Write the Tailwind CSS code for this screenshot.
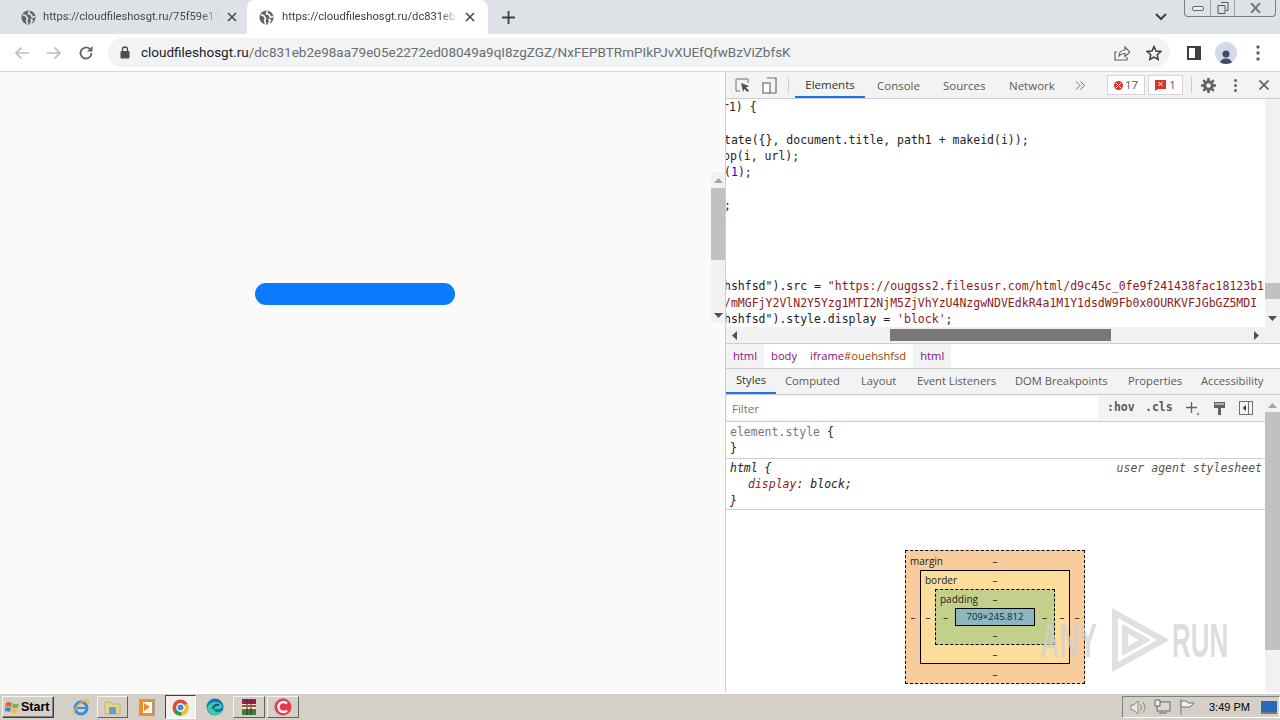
<!DOCTYPE html>
<html>
<head>
<meta charset="utf-8">
<script src="https://cdn.jsdelivr.net/npm/@tailwindcss/browser@4"></script>
</head>
<body class="w-[1280px] h-[720px] overflow-hidden bg-white font-['Open_Sans',sans-serif] text-[#303942]">
<div class="flex flex-col w-[1280px] h-[720px]">

  <!-- Tab strip -->
  <div class="h-[34px] shrink-0 bg-[#dee1e6] flex items-center relative">
    <div class="w-[247px] h-full flex items-center pl-[21px] shrink-0">
      <svg class="w-[15px] h-[15px] shrink-0" viewBox="0 0 16 16"><circle cx="8" cy="8" r="7.5" fill="#5f6368"/><path d="M2 5l3 1 2 3-1 2 1 4M9 1l-1 3 3 1 1 3 3-1M10 10l2 1-2 4" fill="none" stroke="#dee1e6" stroke-width="1.8"/></svg>
      <span class="ml-[7px] w-[176px] overflow-hidden whitespace-nowrap font-['Roboto',sans-serif] text-[11.2px] text-[#45494d] [mask-image:linear-gradient(90deg,#000_90%,transparent)]">https://cloudfileshosgt.ru/75f59e11(</span>
      <svg class="ml-[8px] w-[10px] h-[10px] shrink-0" viewBox="0 0 10 10"><path d="M1 1l8 8M9 1l-8 8" stroke="#45494d" stroke-width="1.6"/></svg>
    </div>
    <div class="w-[241px] h-full bg-white rounded-t-[8px] flex items-center pl-[12px] shrink-0">
      <svg class="w-[15px] h-[15px] shrink-0" viewBox="0 0 16 16"><circle cx="8" cy="8" r="7.5" fill="#5f6368"/><path d="M2 5l3 1 2 3-1 2 1 4M9 1l-1 3 3 1 1 3 3-1M10 10l2 1-2 4" fill="none" stroke="#fff" stroke-width="1.8"/></svg>
      <span class="ml-[8px] w-[176px] overflow-hidden whitespace-nowrap font-['Roboto',sans-serif] text-[11.2px] text-[#3c4043] [mask-image:linear-gradient(90deg,#000_90%,transparent)]">https://cloudfileshosgt.ru/dc831eb2</span>
      <svg class="ml-[7px] w-[10px] h-[10px] shrink-0" viewBox="0 0 10 10"><path d="M1 1l8 8M9 1l-8 8" stroke="#45494d" stroke-width="1.6"/></svg>
    </div>
    <svg class="ml-[14px] w-[13px] h-[13px]" viewBox="0 0 13 13"><path d="M6.5 0v13M0 6.5h13" stroke="#3c4043" stroke-width="1.8"/></svg>
    <svg class="ml-auto mr-[17px] w-[12px] h-[8px]" viewBox="0 0 12 8"><path d="M1 1l5 5 5-5" fill="none" stroke="#3c4043" stroke-width="2"/></svg>
    <div class="w-[92px] h-[17px] mr-[4px] self-start border border-t-0 border-[#7a7d83] rounded-b-[4px] flex">
      <div class="w-[25px] flex items-center justify-center"><div class="w-[12px] h-[5px] border border-[#666] rounded-[2px] bg-[#eee]"></div></div>
      <div class="w-[25px] flex items-center justify-center border-x border-[#a0a3a8]"><svg class="w-[12px] h-[12px]" viewBox="0 0 12 12"><path d="M4 .5h7v8H9M1 3.5h7v8H1z" fill="none" stroke="#555"/></svg></div>
      <div class="flex-1 flex items-center justify-center"><svg class="w-[11px] h-[10px]" viewBox="0 0 11 10"><path d="M1 0l9 10M10 0L1 10" stroke="#777" stroke-width="2"/></svg></div>
    </div>
  </div>

  <!-- Address bar -->
  <div class="h-[38px] shrink-0 bg-white border-b border-[#d3d5d8] flex items-center">
    <svg class="ml-[14px] w-[16px] h-[14px] shrink-0" viewBox="0 0 16 14"><path d="M15 7H2M7.500 1.500L2 7l5.500 5.500" fill="none" stroke="#b9bcc0" stroke-width="1.700"/></svg>
    <svg class="ml-[16px] w-[16px] h-[14px] shrink-0" viewBox="0 0 16 14"><path d="M1 7h13M8.500 1.500L14 7l-5.500 5.500" fill="none" stroke="#b9bcc0" stroke-width="1.700"/></svg>
    <svg class="ml-[16px] w-[16px] h-[16px] shrink-0" viewBox="0 0 16 16"><path d="M13.500 8a5.500 5.500 0 1 1-1.600-3.900" fill="none" stroke="#5f6368" stroke-width="1.800"/><path d="M14.500 1v5.500H9z" fill="#5f6368"/></svg>
    <div class="ml-[14px] w-[1062px] h-[29px] rounded-full bg-[#f1f3f4] flex items-center pl-[12px] shrink-0">
      <svg class="w-[10px] h-[13px] shrink-0" viewBox="0 0 10 13"><path d="M2.500 5V3.500a2.500 2.500 0 0 1 5 0V5" fill="none" stroke="#4b4e52" stroke-width="1.300"/><rect x="0.500" y="5" width="9" height="7.500" rx="1" fill="#4b4e52"/></svg>
      <span class="ml-[11px] whitespace-nowrap text-[13.5px] font-['Roboto',sans-serif] text-[#6a6d71]"><span class="text-[#202124]">cloudfileshosgt.ru</span>/dc831eb2e98aa79e05e2272ed08049a9qI8zgZGZ/NxFEPBTRmPIkPJvXUEfQfwBzViZbfsK</span>
      <svg class="ml-auto w-[16px] h-[16px] shrink-0" viewBox="0 0 16 16"><path d="M3 7H1v8h12v-3M5 11c0-4 3-6 6-6V2l5 5-5 4.500V8.500C8 8.500 6.500 9 5 11z" fill="none" stroke="#5f6368" stroke-width="1.200"/></svg>
      <svg class="ml-[16px] mr-[8px] w-[16px] h-[16px] shrink-0" viewBox="0 0 16 16"><path d="M8 1.500l2 4.500 4.800.5-3.600 3.200 1 4.800L8 12.100 3.800 14.500l1-4.800L1.200 6.500 6 6z" fill="none" stroke="#3c4043" stroke-width="1.500"/></svg>
    </div>
    <svg class="ml-[17px] w-[14px] h-[14px] shrink-0" viewBox="0 0 14 14"><rect x="1" y="1" width="12" height="12" fill="none" stroke="#3c4043" stroke-width="2"/><rect x="8" y="1" width="5" height="12" fill="#3c4043"/></svg>
    <div class="ml-[14px] w-[22px] h-[22px] rounded-full bg-[#d3dbe8] flex items-end justify-center overflow-hidden shrink-0">
      <svg class="w-[14px] h-[15px]" viewBox="0 0 14 15"><circle cx="7" cy="5" r="3.500" fill="#3e4d66"/><path d="M1 15c0-4 3-5.500 6-5.500s6 1.500 6 5.500z" fill="#3e4d66"/></svg>
    </div>
    <svg class="ml-[19px] w-[4px] h-[16px] shrink-0" viewBox="0 0 4 16"><circle cx="2" cy="2" r="1.700" fill="#5f6368"/><circle cx="2" cy="8" r="1.700" fill="#5f6368"/><circle cx="2" cy="14" r="1.700" fill="#5f6368"/></svg>
  </div>

  <!-- Main -->
  <div class="flex-1 min-h-0 flex">
    <!-- Page -->
    <div class="w-[725px] shrink-0 bg-[#fafafa] relative flex flex-col items-start">
      <div class="ml-[255px] mt-[211px] w-[200px] h-[22px] rounded-full bg-[#0a7bfb]"></div>
      <div class="absolute left-[711px] top-[100px] w-[14px] h-[150px] bg-[#f1f1f1] flex flex-col items-center">
        <svg class="mt-[6px] w-[9px] h-[5px]" viewBox="0 0 9 5"><path d="M4.500 0L9 5H0z" fill="#a3a3a3"/></svg>
        <div class="mt-[5px] w-full h-[72px] bg-[#c1c1c1]"></div>
        <svg class="mt-auto mb-[4px] w-[9px] h-[5px]" viewBox="0 0 9 5"><path d="M0 0h9L4.500 5z" fill="#505050"/></svg>
      </div>
    </div>

    <!-- Devtools -->
    <div class="flex-1 min-w-0 border-l border-[#cbcdd1] bg-white flex flex-col">
      <!-- Toolbar -->
      <div class="h-[27px] shrink-0 bg-[#f3f3f3] border-b border-[#cbcdd1] flex items-center text-[11.5px] text-[#5a5a5a]">
        <svg class="ml-[9px] w-[15px] h-[15px] shrink-0" viewBox="0 0 15 15"><path d="M5 13H1V1h12v4" fill="none" stroke="#6e6e6e"/><path d="M6 5l8 3-3 1.500 3 3-1.500 1.500-3-3L8 14z" fill="#555"/></svg>
        <svg class="ml-[12px] w-[15px] h-[17px] shrink-0" viewBox="0 0 15 17"><path d="M5 1h9v15H8" fill="none" stroke="#6e6e6e" stroke-width="1.200"/><rect x="1" y="6" width="7" height="10" fill="#fff" stroke="#6e6e6e" stroke-width="1.200"/></svg>
        <div class="ml-[11px] w-px h-[16px] bg-[#cbcdd1]"></div>
        <div class="ml-[6px] w-[70px] h-full flex items-center justify-center pt-[2px] border-b-2 border-[#1a73e8] text-[#333] shrink-0">Elements</div>
        <span class="ml-[12px] pt-[2px] w-[43px] shrink-0">Console</span>
        <span class="ml-[23px] pt-[2px] w-[43px] shrink-0">Sources</span>
        <span class="ml-[23px] pt-[2px] w-[46px] shrink-0">Network</span>
        <svg class="ml-[20px] w-[10px] h-[9px] shrink-0" viewBox="0 0 10 9"><path d="M1 .5l4 4-4 4M5.500 .5l4 4-4 4" fill="none" stroke="#6e6e6e"/></svg>
        <div class="ml-[22px] w-[38px] h-[20px] bg-white border border-[#d5d5d5] flex items-center justify-center gap-[2px] text-[#5a5a5a] shrink-0">
          <span class="w-[9px] h-[9px] rounded-full bg-[#d9352b] flex items-center justify-center"><svg class="w-[5px] h-[5px]" viewBox="0 0 5 5"><path d="M0 0l5 5M5 0L0 5" stroke="#fff"/></svg></span>17
        </div>
        <div class="ml-[3px] w-[35px] h-[20px] bg-white border border-[#d5d5d5] flex items-center justify-center gap-[3px] text-[#5a5a5a] shrink-0">
          <svg class="w-[11px] h-[11px]" viewBox="0 0 11 11"><path d="M0 0h11v9H3l-3 2z" fill="#d9352b"/><path d="M3.500 2l4 4M7.500 2l-4 4" stroke="#fff"/></svg>1
        </div>
        <div class="ml-[8px] w-px h-[16px] bg-[#cbcdd1] shrink-0"></div>
        <svg class="ml-[9px] w-[15px] h-[15px] shrink-0" viewBox="0 0 15 15"><circle cx="7.500" cy="7.500" r="3.800" fill="none" stroke="#5f6368" stroke-width="3"/><path d="M7.500 0v3M7.500 12v3M0 7.500h3M12 7.500h3M2.200 2.200l2 2M10.800 10.800l2 2M12.800 2.200l-2 2M4.200 10.800l-2 2" stroke="#5f6368" stroke-width="2.600"/></svg>
        <svg class="ml-[18px] w-[3px] h-[13px] shrink-0" viewBox="0 0 3 13"><circle cx="1.500" cy="1.500" r="1.500" fill="#5f6368"/><circle cx="1.500" cy="6.500" r="1.500" fill="#5f6368"/><circle cx="1.500" cy="11.500" r="1.500" fill="#5f6368"/></svg>
        <svg class="ml-[22px] w-[10px] h-[10px] shrink-0" viewBox="0 0 10 10"><path d="M.5 .5l9 9M9.500 .5l-9 9" stroke="#5f6368" stroke-width="1.700"/></svg>
      </div>

      <!-- Code -->
      <div class="h-[245px] shrink-0 relative overflow-hidden border-b border-[#cbcdd1] font-['DejaVu_Sans_Mono',monospace] text-[11.5px] leading-[16.3px] text-[#222]">
        <div class="pr-[15px] h-[228px] overflow-hidden whitespace-nowrap">
          <div class="ml-[-4px]">r1) {</div>
          <div>&nbsp;</div>
          <div class="ml-[-2px]">tate({}, document.title, path1 + makeid(i));</div>
          <div class="ml-[-3px]">op(i, url);</div>
          <div class="ml-[-2px]">(<span class="text-[#1c00cf]">1</span>);</div>
          <div>&nbsp;</div>
          <div class="ml-[-9px]">};</div>
          <div>&nbsp;</div>
          <div>&nbsp;</div>
          <div>&nbsp;</div>
          <div>&nbsp;</div>
          <div class="ml-[-2px]">hshfsd").src = <span class="text-[#8b1a1a]">"https://ouggss2.filesusr.com/html/d9c45c_0fe9f241438fac18123b1</span></div>
          <div class="ml-[-2px] text-[#8b1a1a]">/mMGFjY2VlN2Y5Yzg1MTI2NjM5ZjVhYzU4NzgwNDVEdkR4a1M1Y1dsdW9Fb0x0OURKVFJGbGZ5MDI</div>
          <div class="ml-[-2px]">hshfsd").style.display = <span class="text-[#8b1a1a]">'block'</span>;</div>
        </div>
        <!-- vertical scrollbar -->
        <div class="absolute right-0 top-0 w-[15px] h-[228px] bg-[#f1f1f1] flex flex-col items-center">
          <div class="mt-[184px] w-full h-[16px] bg-[#c1c1c1]"></div>
          <svg class="mt-auto mb-[6px] w-[9px] h-[5px]" viewBox="0 0 9 5"><path d="M0 0h9L4.500 5z" fill="#505050"/></svg>
        </div>
        <!-- horizontal scrollbar -->
        <div class="absolute left-0 bottom-0 w-[554px] h-[16px] bg-[#f1f1f1] flex items-center">
          <svg class="ml-[6px] w-[5px] h-[9px]" viewBox="0 0 5 9"><path d="M5 0v9L0 4.500z" fill="#505050"/></svg>
          <div class="ml-[153px] w-[221px] h-[12px] bg-[#787878]"></div>
          <svg class="ml-[143px] w-[5px] h-[9px]" viewBox="0 0 5 9"><path d="M0 0v9l5-4.500z" fill="#505050"/></svg>
        </div>
      </div>

      <!-- Breadcrumb -->
      <div class="h-[25px] shrink-0 bg-white border-b border-[#cbcdd1] flex items-center text-[11.2px] text-[#881280]">
        <span class="h-full px-[7px] flex items-center bg-[#f3f3f3]">html</span>
        <span class="h-full px-[6px] flex items-center ml-[1px]">body</span>
        <span class="h-full px-[7px] flex items-center"><span>iframe</span><span class="text-[#994500]">#ouehshfsd</span></span>
        <span class="h-full px-[7px] flex items-center bg-[#f3f3f3]">html</span>
      </div>

      <!-- Styles tabs -->
      <div class="h-[26px] shrink-0 bg-[#f3f3f3] border-b border-[#cbcdd1] flex items-center text-[11.2px] text-[#5a5a5a] whitespace-nowrap">
        <div class="w-[50px] h-full flex items-center justify-center border-b-2 border-[#1a73e8] text-[#333] shrink-0">Styles</div>
        <span class="ml-[9px] w-[57px] shrink-0">Computed</span>
        <span class="ml-[19px] w-[36px] shrink-0">Layout</span>
        <span class="ml-[20px] w-[78px] shrink-0">Event Listeners</span>
        <span class="ml-[20px] w-[93px] shrink-0">DOM Breakpoints</span>
        <span class="ml-[20px] w-[53px] shrink-0">Properties</span>
        <span class="ml-[20px] w-[65px] shrink-0">Accessibility</span>
      </div>

      <!-- Styles panel -->
      <div class="flex-1 min-h-0 relative flex flex-col pr-[15px]">
        <div class="h-[27px] shrink-0 bg-[#f3f3f3] border-b border-[#cbcdd1] flex items-center pl-px">
          <div class="w-[371px] h-[24px] bg-white flex items-center pl-[5px] pt-[1px] text-[11.5px] text-[#757575]">Filter</div>
          <span class="ml-[9px] w-[28px] shrink-0 font-['DejaVu_Sans_Mono',monospace] font-bold text-[11.5px] text-[#5a5a5a]">:hov</span>
          <span class="ml-[10px] w-[28px] shrink-0 font-['DejaVu_Sans_Mono',monospace] font-bold text-[11.5px] text-[#5a5a5a]">.cls</span>
          <svg class="ml-[13px] w-[13px] h-[13px] shrink-0" viewBox="0 0 13 13"><path d="M5.500 0v11M0 5.500h11" stroke="#5f6368" stroke-width="1.300"/><path d="M13 10v3h-3z" fill="#888"/></svg>
          <svg class="ml-[14px] w-[13px] h-[15px] shrink-0" viewBox="0 0 13 15"><path d="M1 1h11v6H1zM5 7h3v7H5z" fill="#5f6368"/><path d="M2 3h9" stroke="#fff"/></svg>
          <svg class="ml-[13px] w-[14px] h-[14px] shrink-0" viewBox="0 0 14 14"><rect x=".5" y=".5" width="13" height="13" fill="none" stroke="#6e6e6e"/><path d="M9.500 .5v13" stroke="#6e6e6e"/><path d="M7 4v6L3.500 7z" fill="#444"/></svg>
        </div>
        <div class="h-[37px] shrink-0 border-b border-[#cbcdd1] pl-[4px] pt-[2px] font-['DejaVu_Sans_Mono',monospace] text-[11.5px] leading-[16.25px] text-[#222]">
          <div><span class="text-[#777]">element.style</span> {</div>
          <div>}</div>
        </div>
        <div class="h-[51px] shrink-0 border-b border-[#cbcdd1] pl-[4px] pt-[1px] font-['DejaVu_Sans_Mono',monospace] italic text-[11.5px] leading-[16.25px] text-[#222] relative">
          <div>html {</div>
          <div class="pl-[18px]"><span class="text-[#8b1a1a]">display</span>: block;</div>
          <div>}</div>
          <span class="absolute right-[3px] top-[1px] text-[#555]">user agent stylesheet</span>
        </div>

        <!-- Box model -->
        <div class="ml-[179px] mt-[40px] w-[180px] h-[134px] bg-[#f9cc9d] border border-dashed border-black text-[10px] text-[#222] font-['Open_Sans',sans-serif] grid grid-cols-[14px_1fr_14px] grid-rows-[19px_1fr_19px] leading-none">
          <span class="col-span-3 relative flex items-center justify-center">–<span class="absolute left-[4px] top-[5px]">margin</span></span>
          <span class="flex items-center justify-center">–</span>
          <div class="bg-[#fddd9b] border border-black grid grid-cols-[14px_1fr_14px] grid-rows-[18px_1fr_18px]">
            <span class="col-span-3 relative flex items-center justify-center">–<span class="absolute left-[4px] top-[4px]">border</span></span>
            <span class="flex items-center justify-center">–</span>
            <div class="bg-[#c3d08b] border border-dashed border-black grid grid-cols-[19px_1fr_19px] grid-rows-[18px_1fr_18px]">
              <span class="col-span-3 relative flex items-center justify-center">–<span class="absolute left-[4px] top-[4px]">padding</span></span>
              <span class="flex items-center justify-center">–</span>
              <div class="bg-[#8cb6c0] border border-black flex items-center justify-center text-[9.500px]">709×245.812</div>
              <span class="flex items-center justify-center">–</span>
              <span class="col-span-3 flex items-center justify-center">–</span>
            </div>
            <span class="flex items-center justify-center">–</span>
            <span class="col-span-3 flex items-center justify-center">–</span>
          </div>
          <span class="flex items-center justify-center">–</span>
          <span class="col-span-3 flex items-center justify-center">–</span>
        </div>

        <!-- Styles scrollbar -->
        <div class="absolute right-0 top-0 bottom-0 w-[15px] bg-[#f1f1f1] flex flex-col items-center">
          <svg class="mt-[8px] w-[9px] h-[5px]" viewBox="0 0 9 5"><path d="M4.500 0L9 5H0z" fill="#a3a3a3"/></svg>
          <div class="mt-[4px] w-full h-[238px] bg-[#c1c1c1]"></div>
        </div>

        <!-- Watermark -->
        <div class="absolute left-[314px] top-[213px] h-[64px] w-[192px] flex items-center text-[#cfcfcf]/70 font-['Liberation_Sans',sans-serif] font-bold text-[49px] leading-none">
          <span class="w-[70px] shrink-0 inline-block origin-left scale-x-[.55]">ANY</span>
          <svg class="w-[58px] h-[64px] shrink-0" viewBox="0 0 58 64"><path d="M5 5l48 27L5 59zM15 21l20 11-20 11z" fill="none" stroke="#d6d6d6" stroke-opacity=".75" stroke-width="6"/></svg>
          <span class="ml-[4px] w-[60px] shrink-0 inline-block origin-left scale-x-[.53]">RUN</span>
        </div>
      </div>
    </div>
  </div>

  <!-- Taskbar -->
  <div class="h-[28px] shrink-0 bg-[#d4d0c8] border-t-2 border-white flex items-center relative">
    <div class="ml-[2px] w-[52px] h-[22px] flex items-center bg-[#d4d0c8] border border-[#f4f4f0] border-r-[#404040] border-b-[#404040] shadow-[inset_-1px_-1px_0_#808080] pl-[2px] shrink-0">
      <svg class="w-[16px] h-[15px] shrink-0" viewBox="0 0 16 15"><path d="M1 3c2-1.500 4-1 6 0L6 7C4 6 2 6 0 7z" fill="#e8642c"/><path d="M8 3.500c2 1 4 1 6 0l-1 4c-2 1-4 1-6 0z" fill="#7cb342"/><path d="M0 8c2-1 4-1 6 0l-1 4c-2-1-4-1-6 0z" fill="#2d8fe0"/><path d="M7 8.500c2 1 4 1 6 0l-1 4c-2 1-4 1-6 0z" fill="#f5c02c"/></svg>
      <span class="ml-0 font-['Liberation_Sans',sans-serif] font-bold text-[12.500px] text-black">Start</span>
    </div>
    <svg class="ml-[18px] w-[18px] h-[18px] shrink-0" viewBox="0 0 18 18"><circle cx="9" cy="10" r="6" fill="none" stroke="#3a8fd6" stroke-width="3"/><path d="M4 10h11" stroke="#3a8fd6" stroke-width="2"/><path d="M2 16C1 12 8 3 15 2c2 0 2 2 1 4" fill="none" stroke="#e8b93a" stroke-width="1.300"/></svg>
    <div class="ml-[7px] w-[31px] h-[22px] border border-[#f4f4f0] border-r-[#606060] border-b-[#606060] flex items-center justify-center shrink-0">
      <svg class="w-[17px] h-[16px]" viewBox="0 0 17 16"><path d="M1 3h6l1 2h8v10H1z" fill="#e6d48c" stroke="#b5a060" stroke-width=".6"/><path d="M5 15V8h7v7z" fill="#5aa5d6"/></svg>
    </div>
    <div class="ml-[11px] w-[16px] h-[17px] bg-[#f08a24] border border-[#8aa5c8] flex items-center justify-center shrink-0">
      <div class="w-[9px] h-[11px] bg-white flex items-center justify-center"><svg class="w-[6px] h-[8px]" viewBox="0 0 6 8"><path d="M0 0l6 4-6 4z" fill="#f08a24"/></svg></div>
    </div>
    <div class="ml-[10px] w-[31px] h-[24px] bg-[#f2f0ec] border border-[#404040] border-r-[#fff] border-b-[#fff] flex items-center justify-center shrink-0">
      <svg class="w-[17px] h-[17px]" viewBox="0 0 32 32"><circle cx="16" cy="16" r="15" fill="#dd4b3e"/><path d="M16 16L3 24a15 15 0 0 0 15 7z" fill="#2f9e4f"/><path d="M16 16l13-8a15 15 0 0 1-11 23z" fill="#f5c02c"/><circle cx="16" cy="16" r="7" fill="#4285f4" stroke="#fff" stroke-width="2.500"/></svg>
    </div>
    <svg class="ml-[10px] w-[18px] h-[18px] shrink-0" viewBox="0 0 18 18"><circle cx="9" cy="9" r="8.500" fill="#1473c4"/><path d="M1 11C2 4 11 2 15 6c2 2 1 5-2 5H8c0 3 4 5 9 1-2 5-9 7-13 3-1-1-2-2-3-4z" fill="#42c8a0"/><path d="M7 11c0-3 3-5 6-4" fill="none" stroke="#0c4f94" stroke-width="2"/></svg>
    <div class="ml-[9px] w-[32px] h-[22px] border border-[#f4f4f0] border-r-[#606060] border-b-[#606060] flex items-center justify-center shrink-0">
      <svg class="w-[18px] h-[18px]" viewBox="0 0 18 18"><rect x="2" y="1" width="14" height="5" fill="#a01c50"/><rect x="2" y="6" width="14" height="5" fill="#f4e9d8"/><rect x="2" y="11" width="14" height="6" fill="#4a7a3a"/><path d="M7 1v16M11 1v16" stroke="#333"/><path d="M2 8h14" stroke="#c04040" stroke-width="2"/></svg>
    </div>
    <div class="ml-[2px] w-[32px] h-[22px] border border-[#f4f4f0] border-r-[#606060] border-b-[#606060] flex items-center justify-center shrink-0">
      <svg class="w-[18px] h-[18px]" viewBox="0 0 18 18"><circle cx="9" cy="9" r="8.500" fill="#e8394a"/><path d="M13 5.500a5 5 0 1 0 0 7" fill="none" stroke="#fff" stroke-width="2.400"/></svg>
    </div>
    <div class="ml-auto h-[22px] w-[158px] border border-[#808080] border-r-[#fff] border-b-[#fff] flex items-center shrink-0">
      <svg class="ml-[7px] w-[16px] h-[15px] shrink-0" viewBox="0 0 16 15"><path d="M1 5h3l4-4v13l-4-4H1z" fill="#e8e8e8" stroke="#777" stroke-width=".8"/><path d="M10.500 4.500a5 5 0 0 1 0 6M13 2.500a8 8 0 0 1 0 10" fill="none" stroke="#888"/></svg>
      <svg class="ml-[8px] w-[17px] h-[16px] shrink-0" viewBox="0 0 17 16"><rect x="3" y="3" width="13" height="9" fill="#d9d9d9" stroke="#666"/><path d="M1 1h5v6H1zM5 14h8" stroke="#666" fill="#eee"/></svg>
      <svg class="ml-[8px] w-[16px] h-[16px] shrink-0" viewBox="0 0 16 16"><path d="M2 0v16" stroke="#777"/><path d="M2 2h6l1 2h6l-4 4H2z" fill="#eee" stroke="#777"/></svg>
      <span class="ml-[14px] font-['Liberation_Sans',sans-serif] text-[11px] text-black whitespace-nowrap">3:49 PM</span>
      <div class="ml-[11px] w-[16px] h-[13px] bg-[#2a68b8] border-b-2 border-[#777] shrink-0"></div>
    </div>
  </div>
</div>
</body>
</html>
